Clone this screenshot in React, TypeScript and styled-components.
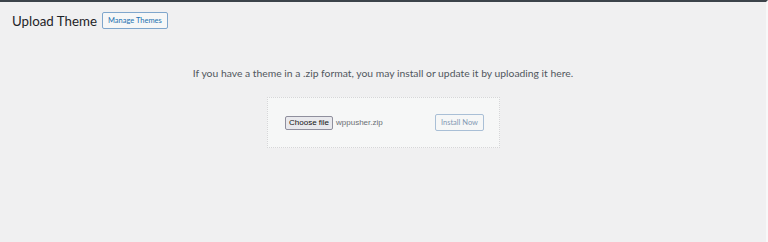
import React from 'react';
import styled, { createGlobalStyle } from 'styled-components';

const DARK = '#3c434a';
const BG = '#f0f0f1';
const BLUE = '#2271b1';

const GlobalStyle = createGlobalStyle`
  html, body {
    margin: 0;
    padding: 0;
    background: ${BG};
  }
  body {
    font-family: Lato, "Open Sans", sans-serif;
    color: ${DARK};
  }
`;

const Page = styled.div`
  width: 768px;
  height: 242px;
  box-sizing: border-box;
  border-top: 2px solid ${DARK};
  border-right: 2px solid #f8f8f8;
  background: ${BG};
  display: flex;
  flex-direction: column;
`;

const Header = styled.div`
  display: flex;
  align-items: center;
  gap: 5px;
  padding: 10px 12px 0;
`;

const Title = styled.h1`
  margin: 0;
  font-size: 13.3px;
  font-weight: 400;
  color: #1d2327;
`;

const OutlineButton = styled.button<{ $faded?: boolean }>`
  font-family: inherit;
  font-size: 7.5px;
  line-height: 1;
  color: ${(p) => (p.$faded ? '#8499b4' : BLUE)};
  background: #f6f7f7;
  border: 1px solid ${(p) => (p.$faded ? '#a9bfd6' : '#7fa6cc')};
  border-radius: 2px;
  padding: 4px 5px;
  height: 17px;
  cursor: pointer;
`;

const Intro = styled.p`
  margin: 38px 0 0;
  text-align: center;
  font-size: 10.35px;
  color: #50575e;
`;

const UploadBox = styled.div`
  align-self: center;
  margin: 18px 0 0 1px;
  width: 233px;
  height: 51px;
  box-sizing: border-box;
  background: #f6f7f7;
  border: 1px dotted #d6d6d8;
  display: flex;
  align-items: center;
  justify-content: space-between;
  padding: 0 15px 0 17px;
`;

const FileRow = styled.div`
  display: flex;
  align-items: center;
  gap: 3px;
`;

const ChooseButton = styled.span`
  font-family: "Liberation Sans", Arial, sans-serif;
  font-size: 8px;
  color: #111;
  background: #e9e9ed;
  border: 1px solid #8f8f9d;
  border-radius: 2px;
  padding: 1px 3px;
  line-height: 10px;
`;

const FileName = styled.span`
  font-family: "Liberation Sans", Arial, sans-serif;
  font-size: 8px;
  color: #6b6f74;
`;

export default function App() {
  return (
    <>
      <GlobalStyle />
      <Page>
        <Header>
          <Title>Upload Theme</Title>
          <OutlineButton>Manage Themes</OutlineButton>
        </Header>
        <Intro>If you have a theme in a .zip format, you may install or update it by uploading it here.</Intro>
        <UploadBox>
          <FileRow>
            <ChooseButton>Choose file</ChooseButton>
            <FileName>wppusher.zip</FileName>
          </FileRow>
          <OutlineButton $faded>Install Now</OutlineButton>
        </UploadBox>
      </Page>
    </>
  );
}
